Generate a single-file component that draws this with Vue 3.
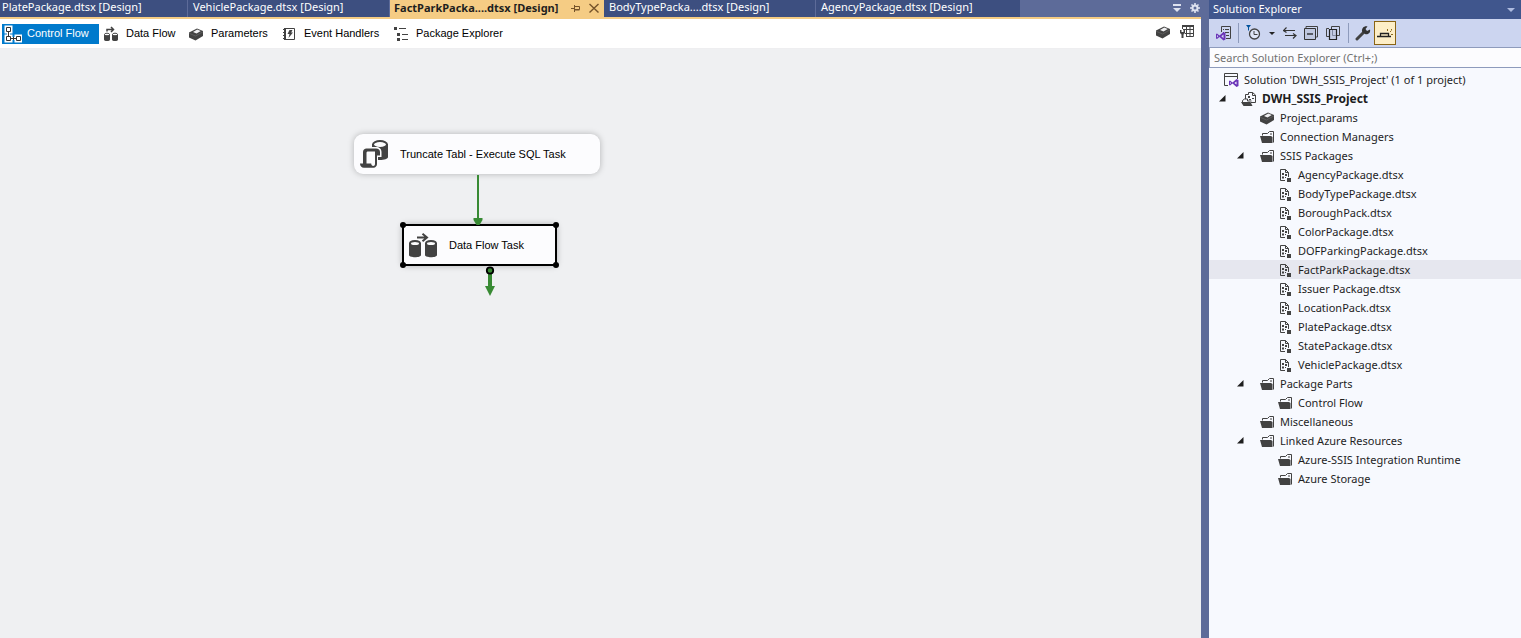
<script setup>
import { ref } from 'vue'

const tabs = [
  { name: 'PlatePackage.dtsx [Design]', cls: 'w-plate' },
  { name: 'VehiclePackage.dtsx [Design]', cls: 'w-vehicle' },
  { name: 'FactParkPacka....dtsx [Design]', cls: 'w-fact', active: true },
  { name: 'BodyTypePacka....dtsx [Design]', cls: 'w-body' },
  { name: 'AgencyPackage.dtsx [Design]', cls: 'w-agency' },
]

const query = ref('')

const tree = [
  { level: 0, icon: 'solution', text: "Solution 'DWH_SSIS_Project' (1 of 1 project)" },
  { level: 1, icon: 'project', text: 'DWH_SSIS_Project', open: true, bold: true },
  { level: 2, icon: 'params', text: 'Project.params' },
  { level: 2, icon: 'folder', text: 'Connection Managers' },
  { level: 2, icon: 'folder', text: 'SSIS Packages', open: true },
  { level: 3, icon: 'package', text: 'AgencyPackage.dtsx' },
  { level: 3, icon: 'package', text: 'BodyTypePackage.dtsx' },
  { level: 3, icon: 'package', text: 'BoroughPack.dtsx' },
  { level: 3, icon: 'package', text: 'ColorPackage.dtsx' },
  { level: 3, icon: 'package', text: 'DOFParkingPackage.dtsx' },
  { level: 3, icon: 'package', text: 'FactParkPackage.dtsx', selected: true },
  { level: 3, icon: 'package', text: 'Issuer Package.dtsx' },
  { level: 3, icon: 'package', text: 'LocationPack.dtsx' },
  { level: 3, icon: 'package', text: 'PlatePackage.dtsx' },
  { level: 3, icon: 'package', text: 'StatePackage.dtsx' },
  { level: 3, icon: 'package', text: 'VehiclePackage.dtsx' },
  { level: 2, icon: 'folder', text: 'Package Parts', open: true },
  { level: 3, icon: 'folder', text: 'Control Flow' },
  { level: 2, icon: 'folder', text: 'Miscellaneous' },
  { level: 2, icon: 'folder', text: 'Linked Azure Resources', open: true },
  { level: 3, icon: 'folder', text: 'Azure-SSIS Integration Runtime' },
  { level: 3, icon: 'folder', text: 'Azure Storage' },
]
</script>

<template>
  <div class="ide">
    <svg class="defs" aria-hidden="true">
      <symbol id="i-params" viewBox="0 0 16 16">
        <path d="M1 6.500 9 2.500l6 2.500v5L7.500 14.500 1 11.500z" fill="#424242" />
        <path d="M1 7.200 7.500 10 15 5.800" fill="none" stroke="#777" stroke-width=".5" />
        <path d="M5 6 9.200 3.600 12.800 5 8.500 7.500z" fill="#f0f0f2" />
      </symbol>
      <symbol id="i-folder" viewBox="0 0 16 16">
        <path d="M3.500 6.500v-2h5l2-2h4v11" fill="none" stroke="#424242" />
        <path d="M11 5h2" stroke="#424242" />
        <path d="M1 7h11l1.500 1v6H3z" fill="#424242" />
      </symbol>
      <symbol id="i-package" viewBox="0 0 16 16">
        <path d="M8 13.500H3.500v-11h5l3 3V10" fill="none" stroke="#424242" />
        <path d="M8.500 2.500v3h3" fill="none" stroke="#424242" />
        <path d="M5 6h2v2H5zM8 7h2v2H8zM5 9.500h2v2H5zM8 10h1v1H8zM10 11h4v4h-4z" fill="#424242" />
      </symbol>
      <symbol id="i-solution" viewBox="0 0 16 16">
        <path d="M5 13.500H1.500v-12h13V7" fill="none" stroke="#424242" />
        <path d="M1 4.500h14" stroke="#424242" />
        <path d="m6 9 1-.5 2.500 2L13.500 7l2 1v6l-2 1-4-3.500-2.500 2L6 13z" fill="#6b35b8" />
        <path d="m7 10 1 1-1 1zm6.500-.5v3l-2-1.500z" fill="#f7f9fe" />
      </symbol>
      <symbol id="i-project" viewBox="0 0 16 16">
        <path d="M4.500 8V3.500h3V1.500h4l3 2.500v7.500H10M11.500 1.500v3h3" fill="none" stroke="#424242" />
        <path d="M7 5h2v2H7zM11 7h2v1h-2zM8 8h2v1H8z" fill="#424242" />
        <path d="M1.500 13V9.500l2-1.500h3v2h4" fill="none" stroke="#424242" stroke-width="1" />
        <path d="M0 11h9.500l2 4H2.500z" fill="#424242" />
      </symbol>
    </svg>

    <main class="editor">
      <nav class="tabs" aria-label="Open documents">
        <div v-for="t in tabs" :key="t.name" class="tab" :class="[t.cls, { active: t.active }]">
          <button class="tab-label" type="button">{{ t.name }}</button>
          <template v-if="t.active">
            <button class="tab-tool" type="button" aria-label="Pin">
              <svg width="9" height="9" viewBox="0 0 9 9"><path d="M0 4.500h3M3.500 1v7M3.500 2.500h5v3h-5M3.500 6h5" fill="none" stroke="#75532a" /></svg>
            </button>
            <button class="tab-tool" type="button" aria-label="Close">
              <svg width="10" height="10" viewBox="0 0 10 10"><path d="m.5 1 9 8.500m0-8.500-9 8.500" stroke="#75532a" stroke-width="1.400" /></svg>
            </button>
          </template>
        </div>
        <div class="tab-end">
          <button type="button" aria-label="Document list">
            <svg width="8" height="8" viewBox="0 0 8 8"><path d="M0 0h8v2H0zM0 4h8L4 8z" fill="#dfe3f0" /></svg>
          </button>
          <button type="button" aria-label="Options">
            <svg width="10" height="10" viewBox="0 0 10 10"><circle cx="5" cy="5" r="2.500" fill="none" stroke="#dfe3f0" stroke-width="2" /><path d="M5 0v2M5 8v2M0 5h2M8 5h2M1.500 1.500l1.300 1.300M7.200 7.200l1.300 1.300M8.500 1.500 7.200 2.800M2.800 7.200 1.500 8.500" stroke="#dfe3f0" stroke-width="1.600" /></svg>
          </button>
        </div>
      </nav>

      <div class="designer-bar">
        <button class="view current" type="button">
          <svg width="18" height="18" viewBox="0 0 18 18">
            <path d="M2 2h5v5H2zM2 11h5v5H2zM12 11h5v5h-5zM4.500 7v4M7 13.500h5" fill="none" stroke="#fff" stroke-width="3" />
            <path d="M2.500 2.500h4v4h-4zM2.500 11.500h4v4h-4zM12.500 11.500h4v4h-4z" fill="#fff" stroke="#333" />
            <path d="M4.500 7v4M7 13.500h5M9.500 12v3" stroke="#333" />
          </svg>
          <span>Control Flow</span>
        </button>
        <button class="view v-data" type="button">
          <svg width="16" height="16" viewBox="0 0 16 16">
            <path d="M1 8.500v5c0 2 6 2 6 0v-5M9 8.500v5c0 2 6 2 6 0v-5" fill="#424242" />
            <ellipse cx="4" cy="8.500" rx="2.500" ry="1.300" fill="#fff" stroke="#424242" /><ellipse cx="12" cy="8.500" rx="2.500" ry="1.300" fill="#fff" stroke="#424242" />
            <path d="M4 5.500V3.500h6M8 1l2.500 2.500L8 6" fill="none" stroke="#424242" stroke-width="1.500" />
          </svg>
          <span>Data Flow</span>
        </button>
        <button class="view v-params" type="button"><svg width="16" height="16"><use href="#i-params" /></svg><span>Parameters</span></button>
        <button class="view v-events" type="button">
          <svg width="14" height="14" viewBox="0 0 14 14">
            <path d="M3.500 1.500h9v11h-9z" fill="#fff" stroke="#424242" /><path d="M3 1v12" stroke="#424242" stroke-width="2" />
            <path d="M1 2.500h2M1 5.500h2M1 8.500h2M1 11.500h2" stroke="#424242" />
            <path d="M7.500 3h3L9.200 5.500H11L6.500 11l1-4H5.500z" fill="#424242" />
          </svg>
          <span>Event Handlers</span>
        </button>
        <button class="view v-explorer" type="button">
          <svg width="16" height="16" viewBox="0 0 16 16"><path d="M0 1h3v3H0zM3 7h3v3H3zM3 12h3v3H3zM5 2h7v1H5zM8 8h6v1H8zM8 13h6v1H8z" fill="#424242" /></svg>
          <span>Package Explorer</span>
        </button>
        <div class="bar-end">
          <button type="button" aria-label="Parameters"><svg width="16" height="16"><use href="#i-params" /></svg></button>
          <button type="button" aria-label="Variables">
            <svg width="16" height="16" viewBox="0 0 16 16">
              <path d="M3.500 5V1.500h11v11H7M4 5.500h10.500M6 9.500h8.500M7.500 2v10.500M11 2v10.500" fill="none" stroke="#424242" />
              <path d="M3 1h12v2H3z" fill="#424242" />
              <path d="M1 6v3l1.500 1.500V14h2v-3.500L6 9V6H4.500v2h-2V6z" fill="#424242" />
            </svg>
          </button>
        </div>
      </div>

      <section class="canvas" aria-label="Control flow designer">
        <div class="node n-sql">
          <svg width="28" height="28" viewBox="0 0 28 28">
            <path d="M12 4v13c0 4 16 4 16 0V4z" fill="#424242" />
            <ellipse cx="20" cy="4.500" rx="7" ry="3.500" fill="#fcfcfd" stroke="#424242" stroke-width="2" />
            <path d="M2 7h14c3.500 0 5.500 2 5.500 5v5H18v11H1z" fill="#fcfcfd" />
            <path d="M3 23.500V12c0-2 1.500-3.500 3.500-3.500H16c2.500 0 4 1.500 4 3.500v3.500h-3V24c0 2-1.500 3.700-3.500 3.700H4c-2.500 0-4-1.700-4-4.200z" fill="#424242" />
            <path d="M6.500 23.500V13c0-1 .5-1.500 1.500-1.500h7V24c0 1.200-.7 2-1.800 2s-2-1-2-2.500z" fill="#fcfcfd" />
          </svg>
          <span>Truncate Tabl - Execute SQL Task</span>
        </div>
        <div class="node n-data">
          <svg width="28" height="25" viewBox="0 0 28 25">
            <path d="M0 10v12c0 3 12 3 12 0V10M16 10v12c0 3 12 3 12 0V10" fill="#424242" />
            <ellipse cx="6" cy="10.500" rx="5" ry="2.500" fill="#fcfcfd" stroke="#424242" stroke-width="2" />
            <ellipse cx="22" cy="10.500" rx="5" ry="2.500" fill="#fcfcfd" stroke="#424242" stroke-width="2" />
            <path d="M8 4.500h10M13.500.8 18 4.500l-4.500 3.700" fill="none" stroke="#424242" stroke-width="2" />
          </svg>
          <span>Data Flow Task</span>
        </div>
        <svg class="wires" width="620" height="260" viewBox="0 0 620 260" aria-hidden="true">
          <path d="M478 126v44" stroke="#388a34" stroke-width="2" />
          <path d="M473.500 169h9v2L479.500 176h-3L473.500 171z" fill="#388a34" />
          <path d="M490 222v18" stroke="#388a34" stroke-width="4" />
          <path d="M485 237h10l-5 10z" fill="#388a34" />
          <circle cx="490" cy="221.500" r="3.200" fill="#388a34" stroke="#000" stroke-width="1.800" />
          <circle cx="403" cy="176" r="3" /><circle cx="556" cy="176" r="3" />
          <circle cx="403" cy="216" r="3" /><circle cx="556" cy="216" r="3" />
        </svg>
      </section>
    </main>

    <aside class="explorer">
      <header class="ex-title">
        <h2>Solution Explorer</h2>
        <button type="button" aria-label="Window position"><svg width="8" height="4" viewBox="0 0 8 4"><path d="M0 0h8L4 4z" fill="#aebbe0" /></svg></button>
      </header>
      <div class="ex-tools" role="toolbar" aria-label="Solution Explorer">
        <button type="button" aria-label="Home">
          <svg width="16" height="16" viewBox="0 0 16 16">
            <path d="M5.500 7V1.500h9v12H10" fill="none" stroke="#424242" /><path d="M7 4h1v1H7zM9 4h4v1H9zM7 7h1v1H7zM9 7h4v1H9zM10 10h3v1h-3z" fill="#424242" />
            <path d="m0 9 1-.5 2.500 2L7.500 7l2 1v6.500l-2 1-4-3.500L1 14l-1-.5z" fill="#6b35b8" /><path d="m1 10 1.300 1.200L1 12.500zm6.500-.5v3.700l-2.200-1.900z" fill="#ccd5f0" />
          </svg>
        </button>
        <i class="rule"></i>
        <button type="button" aria-label="Pending changes filter">
          <svg width="16" height="16" viewBox="0 0 16 16">
            <circle cx="9.500" cy="9" r="5" fill="#dfe5f6" stroke="#424242" stroke-width="1.300" /><path d="M9 6v3.500h3.500" fill="none" stroke="#424242" />
            <path d="M1 0h5L4 2.500V6L3 5V2.500z" fill="#00539c" />
          </svg>
        </button>
        <button class="drop" type="button" aria-label="Filter options"><svg width="6" height="3" viewBox="0 0 6 3"><path d="M0 0h6L3 3z" fill="#222" /></svg></button>
        <button type="button" aria-label="Sync with active document">
          <svg width="14" height="14" viewBox="0 0 14 14"><path d="M.5 4.500H12M3.500 1.500l-3 3 3 2M13 9.500H2M10 7.500l3 2-3 3" fill="none" stroke="#333" stroke-width="1.200" /></svg>
        </button>
        <button type="button" aria-label="Collapse all">
          <svg width="16" height="16" viewBox="0 0 16 16"><path d="M3 3V1.500h11.500V12H13" fill="none" stroke="#424242" /><path d="M1.500 3.500h11v11h-11z" fill="#bfc7df" stroke="#333" /><path d="M4 9h6" stroke="#111" stroke-width="1.200" /></svg>
        </button>
        <button type="button" aria-label="Show all files">
          <svg width="16" height="16" viewBox="0 0 16 16"><path d="M6.500 4V1.500h8v9H12M4 11.500H1.500v-8H4" fill="none" stroke="#424242" /><path d="M4.500 4.500h7v10h-7z" fill="#c3cbe4" stroke="#222" stroke-width="1.200" /><path d="M7.500 5v5.500H11" fill="none" stroke="#8088a0" /></svg>
        </button>
        <i class="rule last"></i>
        <button type="button" aria-label="Properties">
          <svg width="16" height="16" viewBox="0 0 16 16"><path d="m2 14 7-7" stroke="#424242" stroke-width="3" stroke-linecap="round" /><path d="M12.500 1.500 10.500 4l1.500 2 3-1.500c1 4-3 5.500-5 4.500L7 6.500C6.500 3 9.500.5 12.500 1.500z" fill="#333" /></svg>
        </button>
        <button class="on" type="button" aria-label="Preview selected items">
          <svg width="16" height="16" viewBox="0 0 16 16"><path d="M0 11.500h3M12 11.500h2M3.500 8.500h8v3h-8z" fill="none" stroke="#222" stroke-width="1.300" /><path d="M10.500 4v2M13 7l1.500-1.500M14 9.500h2M14 4.500h1" stroke="#8a6a20" /></svg>
        </button>
      </div>
      <input v-model="query" class="search" type="text" aria-label="Search Solution Explorer" placeholder="Search Solution Explorer (Ctrl+;)" />
      <ul class="tree" role="tree" aria-label="Solution">
        <li v-for="n in tree" :key="n.text" role="treeitem" :aria-level="n.level + 1" :aria-selected="!!n.selected" class="row" :class="['level-' + n.level, { selected: n.selected, bold: n.bold }]">
          <span v-if="n.level" class="twist"><svg v-if="n.open" width="7" height="7" viewBox="0 0 7 7"><path d="M6.500 0v6.500H0z" fill="#1e1e1e" /></svg></span>
          <svg width="16" height="16" aria-hidden="true"><use :href="'#i-' + n.icon" /></svg>
          <span>{{ n.text }}</span>
        </li>
      </ul>
    </aside>
  </div>
</template>

<style>
body { margin: 0; }
</style>

<style scoped>
.ide { display: flex; min-height: 100vh; background: #5d6b99; gap: 8px; font-family: "Noto Sans", "Open Sans", sans-serif; font-size: 11px; color: #1e1e1e; }
.defs { position: absolute; width: 0; height: 0; }
button { border: 0; padding: 0; margin: 0; background: none; font: inherit; color: inherit; display: flex; align-items: center; }
svg { display: block; flex: none; }

.editor { flex: 1; min-width: 0; display: flex; flex-direction: column; }
.tabs { display: flex; height: 17px; border-bottom: 2px solid #f5cc84; }
.tab { box-sizing: border-box; display: flex; align-items: center; gap: 9px; background: #3d4f80; border-right: 1px solid #5d6b99; color: #fff; line-height: 14px; white-space: nowrap; padding: 0 2px 3px; }
.tab + .tab { padding-left: 5px; }
.tab-label { height: 14px; }
.w-plate { width: 188px; }
.w-vehicle { width: 202px; }
.w-fact { width: 214px; }
.w-body { width: 212px; }
.w-agency { width: 204px; border: 0; }
.tab.active { background: #f5cc84; color: #1e1e1e; font-weight: 700; border: 0; padding: 0 5px 1px 4px; }
.active .tab-label { margin-right: auto; }
.tab-end { margin-left: auto; display: flex; align-items: center; gap: 9px; padding: 0 1px 2px 0; }

.designer-bar { display: flex; align-items: center; height: 29px; background: #fff; border-bottom: 1px solid #eeeef0; padding-left: 2px; font: 11px "Liberation Sans", sans-serif; color: #000; }
.view { height: 20px; white-space: nowrap; }
.view span { padding-bottom: 2px; }
.view.current { box-sizing: border-box; width: 97px; gap: 5px; padding-left: 2px; background: #007acc; color: #fff; }
.v-data { width: 85px; gap: 7px; padding-left: 4px; }
.v-params { width: 94px; gap: 7px; }
.v-events { width: 112px; gap: 8px; }
.v-explorer { gap: 6px; }
.v-data { margin-right: 4px; }
.bar-end { margin-left: auto; display: flex; gap: 8px; padding: 0 6px 4px 0; }

.canvas { position: relative; flex: 1; background: #eff0f2; overflow: hidden; font: 11px "Liberation Sans", sans-serif; color: #000; }
.node { position: absolute; box-sizing: border-box; display: flex; align-items: center; background: #fcfcfe; white-space: nowrap; box-shadow: 0 0 6px rgba(0, 0, 0, .25); }
.n-sql { left: 354px; top: 85px; width: 246px; height: 40px; border-radius: 9px; padding-left: 6px; gap: 12px; }
.n-data { left: 402px; top: 175px; width: 155px; height: 42px; border: 2px solid #000; border-radius: 4px; padding-left: 5px; gap: 12px; }
.wires { position: absolute; left: 0; top: 0; pointer-events: none; }

.explorer { width: 312px; flex: none; display: flex; flex-direction: column; background: #f7f9fe; }
.ex-title { display: flex; align-items: center; justify-content: space-between; height: 19px; background: #40568d; color: #fff; padding: 0 6px 0 4px; }
.ex-title h2 { margin: 0; padding-bottom: 2px; font-size: 11px; font-weight: 400; line-height: 17px; }
.ex-tools { display: flex; align-items: center; height: 28px; background: #ccd5f0; padding-left: 7px; gap: 6px; }
.rule { width: 1px; height: 20px; background: #8e9bbc; }
.rule.last { margin-left: 1px; }
.drop { margin: 0 2px; }
.ex-tools .on { box-sizing: border-box; width: 22px; height: 24px; justify-content: center; background: #fdeec7; border: 1px solid #8a6414; margin-left: -3px; }
.search { box-sizing: border-box; width: 100%; height: 21px; border: 1px solid #8e9bbc; border-right: 0; background: #fcfcfe; font: inherit; padding: 0 4px; margin: 0; outline: 0; border-radius: 0; }
.search::placeholder { color: #717171; opacity: 1; }
.tree { list-style: none; margin: 0; padding: 2px 0 0; }
.row { display: flex; align-items: center; height: 19px; line-height: 19px; gap: 5px; white-space: nowrap; }
.row.selected { background: #e6e7ef; }
.row.bold { font-size: 12px; font-weight: 700; }
.twist { width: 17px; }
.level-0 { padding-left: 14px; }
.level-1 { padding-left: 10px; }
.level-2 { padding-left: 28px; }
.level-3 { padding-left: 46px; }
</style>
